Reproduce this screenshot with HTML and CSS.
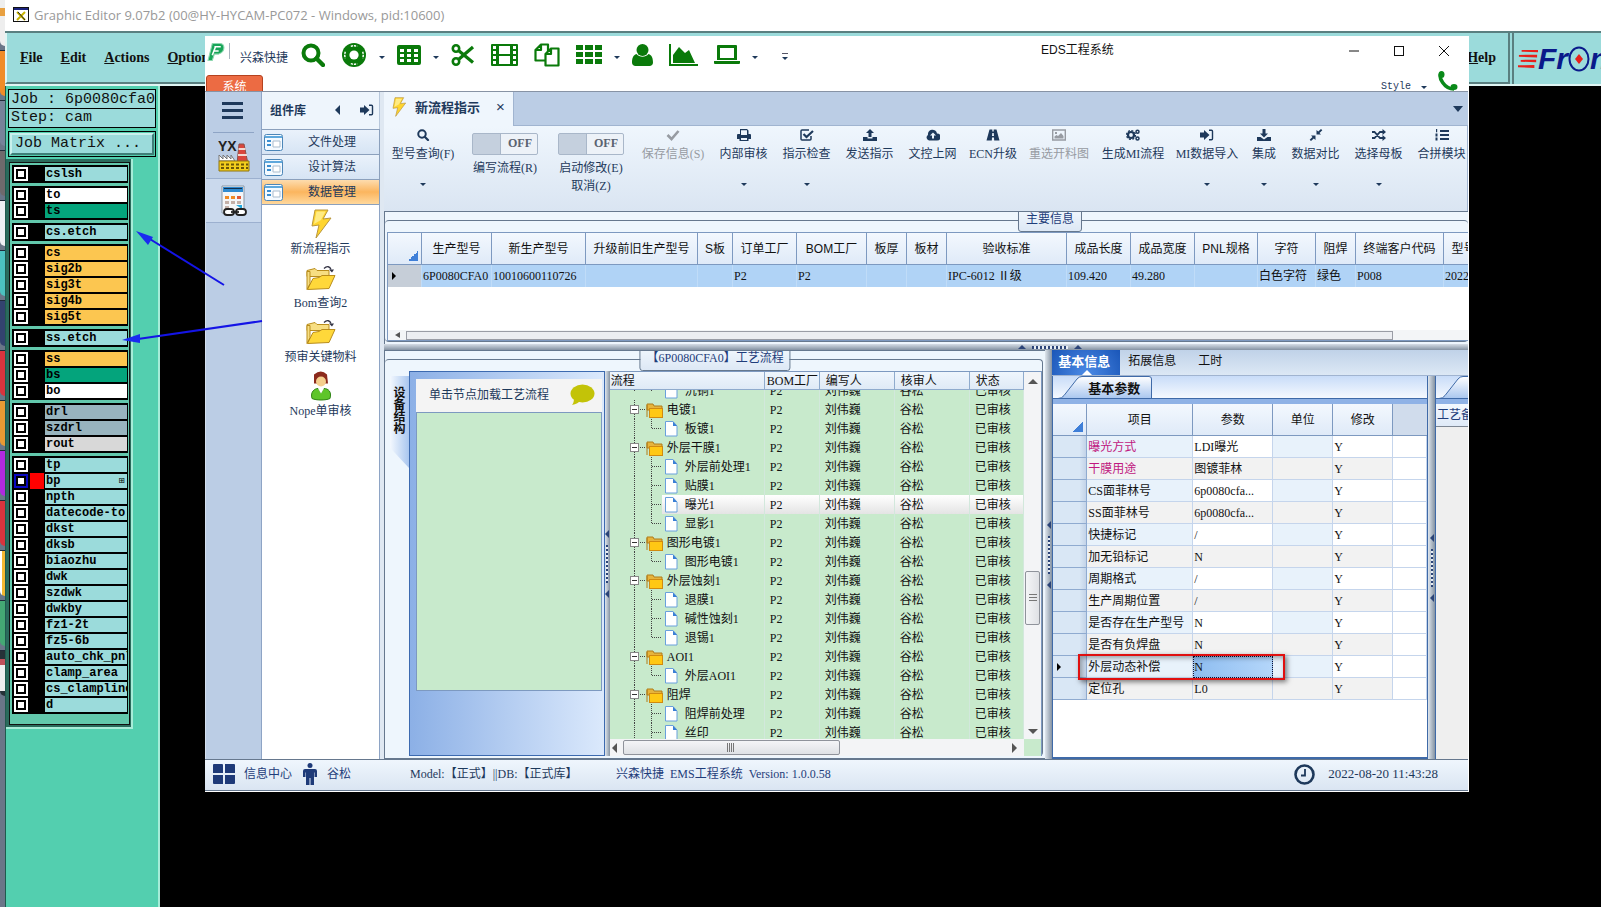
FILE: index.html
```html
<!DOCTYPE html>
<html lang="zh-CN">
<head>
<meta charset="utf-8">
<title>EDS工程系统</title>
<link rel="stylesheet" href="styles.css">
</head>
<body>
<svg class="sprite" aria-hidden="true">
  <symbol id="i-search" viewBox="0 0 24 24"><circle cx="10" cy="10" r="7.5" fill="none" stroke="currentColor" stroke-width="4"/><path d="M15.5 15.5 22 22" stroke="currentColor" stroke-width="4.4" stroke-linecap="round"/></symbol>
  <symbol id="i-ring" viewBox="0 0 26 26"><circle cx="13" cy="13" r="13" fill="currentColor"/><circle cx="13" cy="13" r="5" fill="#fff"/><g fill="none" stroke="#fff" stroke-width="1.6" stroke-dasharray="2.4 1"><path d="M9.500 3.600a10 10 0 0 1 7 0M9.500 22.400a10 10 0 0 0 7 0M3.600 9.500a10 10 0 0 0 0 7M22.400 9.500a10 10 0 0 1 0 7"/></g></symbol>
  <symbol id="i-table" viewBox="0 0 24 20"><path fill-rule="evenodd" fill="currentColor" d="M2 0h20a2 2 0 0 1 2 2v16a2 2 0 0 1-2 2H2a2 2 0 0 1-2-2V2a2 2 0 0 1 2-2zM3 4v3h4V4zm7 0v3h4V4zm7 0v3h4V4zM3 9v3h4V9zm7 0v3h4V9zm7 0v3h4V9zM3 14v3h4v-3zm7 0v3h4v-3zm7 0v3h4v-3z"/></symbol>
  <symbol id="i-cut" viewBox="0 0 24 24"><g fill="none" stroke="currentColor" stroke-width="2.6"><circle cx="5" cy="5.500" r="3.200"/><circle cx="5" cy="18.500" r="3.200"/><path d="M7.500 7.500 22 19.500M7.500 16.500 22 4" stroke-width="3.200"/></g></symbol>
  <symbol id="i-film" viewBox="0 0 27 22"><path fill-rule="evenodd" fill="currentColor" d="M1 0h25a1 1 0 0 1 1 1v20a1 1 0 0 1-1 1H1a1 1 0 0 1-1-1V1a1 1 0 0 1 1-1zM2 2v3h3V2zm0 5v3h3V7zm0 5v3h3v-3zm0 5v3h3v-3zM22 2v3h3V2zm0 5v3h3V7zm0 5v3h3v-3zm0 5v3h3v-3zM8 2v8h11V2zm0 10v8h11v-8z"/></symbol>
  <symbol id="i-copy" viewBox="0 0 26 24"><g fill="#fff" stroke="currentColor" stroke-width="2.200" stroke-linejoin="round"><path d="M7 1.500h7v16H1.500V7zM7 1.500V7H1.500"/><path d="M17 5.500h7.500v17H11.500V11zM17 5.500V11h-5.500"/></g></symbol>
  <symbol id="i-grid" viewBox="0 0 26 20"><path fill="currentColor" d="M0 0h7v5H0zM9 0h8v5H9zM19 0h7v5h-7zM0 7h7v5H0zM9 7h8v5H9zM19 7h7v5h-7zM0 14h7v5H0zM9 14h8v5H9zM19 14h7v5h-7z"/></symbol>
  <symbol id="i-user" viewBox="0 0 21 22"><circle cx="10.500" cy="6" r="6" fill="currentColor"/><path fill="currentColor" d="M4.500 10c3 3.500 9 3.500 12 0 3.500 1 4.500 4.500 4.500 8.500 0 2-1.500 3.500-3.500 3.500h-14C1.500 22 0 20.500 0 18.500 0 14.500 1 11 4.500 10z"/></symbol>
  <symbol id="i-area" viewBox="0 0 29 22"><path fill="currentColor" d="M0 0h2v20h27v2H0zM4 19v-8l6-8 6 6 4-3 6 13z"/></symbol>
  <symbol id="i-laptop" viewBox="0 0 26 20"><path fill-rule="evenodd" fill="currentColor" d="M4 0h18a1 1 0 0 1 1 1v14H3V1a1 1 0 0 1 1-1zm2 3v10h14V3zM0 16h26v2a1 1 0 0 1-1 1H1a1 1 0 0 1-1-1z"/></symbol>
  <symbol id="i-bolt" viewBox="0 0 22 30"><path d="M5 1h13l-5 9 8-1L6 29l3-13-7 1z" fill="#ffd52e" stroke="#b9963c" stroke-width="1"/><path d="M6.500 2.500h9L11 11l-7 4z" fill="#fff3a8" opacity=".7"/></symbol>
  <symbol id="i-form" viewBox="0 0 19 17"><rect x=".5" y=".5" width="18" height="16" rx="2" fill="#f4faff" stroke="#4c86b8"/><path d="M1 2h17v2H1z" fill="#5fa8dc"/><path d="M3 7h4M3 11h4" stroke="#3b8ed0" stroke-width="2"/><path d="M9 7h7v6H9z" fill="#fff" stroke="#a9bccd"/></symbol>
  <symbol id="i-folder-open" viewBox="0 0 30 25"><path d="M1 5l8-2 2 2h12v6H1z" fill="#f7de82" stroke="#b98d1c"/><path d="M1 24V6h3v12z" fill="#f7de82" stroke="#b98d1c"/><path d="M1.500 24 7 13l6-1 3-2h13l-6 13z" fill="#ffd83a" stroke="#b98d1c"/><path d="M18 3c3-3 6-2 7 1" fill="none" stroke="#334" stroke-width="1.300"/><path d="M23 4h5l-2 3z" fill="#334"/></symbol>
  <symbol id="i-folder" viewBox="0 0 17 16"><path d="M1 2h6l1 2h8v4H1z" fill="#e6b43c" stroke="#b07c1a"/><path d="M1 15V3" stroke="#b07c1a"/><rect x="3.500" y="6.500" width="13" height="9" fill="#ffc814" stroke="#d08a10"/></symbol>
  <symbol id="i-file" viewBox="0 0 14 16"><path d="M1.500.5H9L13 5v10H1.500z" fill="#fff" stroke="#69a0dc"/><path d="M9 .5V5h4z" fill="#3a7fd5"/></symbol>
  <symbol id="i-person" viewBox="0 0 22 29"><path d="M4 3q7-6 13 0l1 9H4z" fill="#8c2a1c"/><circle cx="11" cy="10" r="5" fill="#f5cf8e"/><path d="M2 27c-2-7 3-10 6-10l3 4 3-4c4 0 8 3 6 10-4 2-14 2-18 0z" fill="#5ec52a" stroke="#2f8415"/><path d="m8 17 3 5 3-5z" fill="#fff"/></symbol>
  <symbol id="i-check" viewBox="0 0 14 12"><path d="m1.500 6 4 4 7-8" fill="none" stroke="currentColor" stroke-width="2.600"/></symbol>
  <symbol id="i-print" viewBox="0 0 14 12"><path fill="currentColor" fill-rule="evenodd" d="M3 0h7l1.500 1.500V5H13a1 1 0 0 1 1 1v4h-2.500v2h-9v-2H0V6a1 1 0 0 1 1-1h2zm1 1.200V6h6V1.200zM4 9v2h6V9z"/></symbol>
  <symbol id="i-tick" viewBox="0 0 14 12"><path d="M11 7v3a1 1 0 0 1-1 1H2a1 1 0 0 1-1-1V2a1 1 0 0 1 1-1h7" fill="none" stroke="currentColor" stroke-width="1.500"/><path d="m3.500 5 3 3L13 2" fill="none" stroke="currentColor" stroke-width="2.200"/></symbol>
  <symbol id="i-up" viewBox="0 0 14 12"><path fill="currentColor" d="m7 0 4 4H8.500v4h-3V4H3zM0 8h4.500v1.500h5V8H14v4H0z"/></symbol>
  <symbol id="i-down" viewBox="0 0 14 12"><path fill="currentColor" d="m7 8.500-4-4h2.500V0h3v4.500H11zM0 8h3.500L7 10.500 10.500 8H14v4H0z"/></symbol>
  <symbol id="i-cloud" viewBox="0 0 14 12"><path fill="currentColor" fill-rule="evenodd" d="M3 11.500a3 3 0 0 1-1-5.500 4.500 4.500 0 0 1 9-1.500 3.500 3.500 0 0 1 0 7zM7 3.500l-3 3h2v3h2v-3h2z"/></symbol>
  <symbol id="i-road" viewBox="0 0 14 12"><path fill="currentColor" fill-rule="evenodd" d="M3.500.5h2.800v2h1.400v-2h2.800L13.500 11.500H8.200l-.2-3H6l-.2 3H.5zM6.300 4 6 7h2l-.3-3z"/></symbol>
  <symbol id="i-pic" viewBox="0 0 14 12"><path d="M.7 1h12.600v10H.7z" fill="none" stroke="currentColor" stroke-width="1.400"/><path fill="currentColor" d="M2.500 9.500V7.500l2-1.500 1.500 1 3-3 2.500 3v2.500zM3 3h2v2H3z"/></symbol>
  <symbol id="i-gears" viewBox="0 0 14 12"><circle cx="5" cy="6" r="3" fill="none" stroke="currentColor" stroke-width="2.200"/><circle cx="5" cy="6" r="4.500" fill="none" stroke="currentColor" stroke-width="1.200" stroke-dasharray="2 1.500"/><circle cx="11.500" cy="2.800" r="1.500" fill="none" stroke="currentColor" stroke-width="1.500"/><circle cx="11.500" cy="9.500" r="1.500" fill="none" stroke="currentColor" stroke-width="1.500"/></symbol>
  <symbol id="i-enter" viewBox="0 0 14 12"><path fill="currentColor" d="M0 3.500h4V1L9.500 6 4 11V8.500H0z"/><path d="M9 1.200h2.500a1 1 0 0 1 1 1v7.600a1 1 0 0 1-1 1H9" fill="none" stroke="currentColor" stroke-width="1.400"/></symbol>
  <symbol id="i-compress" viewBox="0 0 14 12"><path fill="currentColor" d="M7.500 5.500V1l1.700 1.600L12 0l1.300 1.200-2.800 2.700L12 5.500zM6.500 6.500V11l-1.700-1.600L2 12 .7 10.800l2.800-2.700L2 6.500z"/></symbol>
  <symbol id="i-shuffle" viewBox="0 0 14 12"><path d="M0 3h2.500L8 9h3M0 9h2.500L8 3h3" fill="none" stroke="currentColor" stroke-width="1.800"/><path fill="currentColor" d="m10.500 0 3.500 3-3.500 3zM10.500 6l3.500 3-3.500 3z"/></symbol>
  <symbol id="i-list" viewBox="0 0 14 12"><path fill="currentColor" d="M5 1h9v2H5zM5 5h9v2H5zM5 9h9v2H5zM1 0h1.200v3.300H1zM.5 4.500h2v3h-2zM.5 8.500h2v3h-2z"/></symbol>
</svg>

<div class="desktop">
  <aside class="dock">
    <i class="d1"></i><i class="d2"></i><i class="d3"></i><i class="d4"></i><i class="d5"></i><i class="d6"></i><i class="d7"></i><i class="d8"></i><i class="d9"></i><i class="d10"></i><i class="d11"></i><i class="d12"></i><i class="d13"></i><i class="d14"></i>
  </aside>

  <section class="editor">
    <header class="ed-title">
      <svg width="16" height="15" viewBox="0 0 16 15"><rect x=".5" y=".5" width="15" height="14" fill="#fff" stroke="#111"/><path d="M1 1h14v2H1z" fill="#1a237e"/><path d="m4 5 8 8M12 5l-8 8" stroke="#c8b400" stroke-width="2"/><path d="m5 5 7 8" stroke="#222"/></svg>
      <span>Graphic Editor 9.07b2 (00@HY-HYCAM-PC072 - Windows, pid:10600)</span>
    </header>
    <div class="ed-menu">
      <nav class="menu-panel">
        <button>File</button><button>Edit</button><button>Actions</button><button>Options</button>
        <button class="help">Help</button>
      </nav>
      <div class="brand">
        <svg width="20" height="22" viewBox="0 0 22 22"><path fill="#e8201a" d="M4 1h18v2.500L4 3zM1 6.500l20-.2v3L1 8.500zM3 12l17-.3v3L3 14zM0 18l18-.5v3.300L0 20z"/></svg>
        <span>Fr</span>
        <svg width="22" height="26" viewBox="0 0 22 26"><ellipse cx="11" cy="13" rx="9.500" ry="11.500" fill="none" stroke="#0a1a8a" stroke-width="2"/><path fill="#e8201a" d="m11 8 4 5-4 5-4-5z"/></svg>
        <span>n</span>
      </div>
    </div>
    <div class="ed-body">
      <div class="job">
        <div class="job-info"><div>Job : 6p0080cfa0</div><div>Step: cam</div></div>
        <div class="job-btn"><button>Job Matrix ...</button></div>
        <div class="layers">
          <div class="stack">
            <div class="grp"><label><input type="checkbox"><span>cslsh</span></label></div>
            <div class="grp"><label><input type="checkbox"><span class="w">to</span></label><label><input type="checkbox"><span class="g">ts</span></label></div>
            <div class="grp"><label><input type="checkbox"><span>cs.etch</span></label></div>
            <div class="grp"><label><input type="checkbox"><span class="o">cs</span></label><label><input type="checkbox"><span class="o">sig2b</span></label><label><input type="checkbox"><span class="o">sig3t</span></label><label><input type="checkbox"><span class="o">sig4b</span></label><label><input type="checkbox"><span class="o">sig5t</span></label></div>
            <div class="grp"><label><input type="checkbox"><span>ss.etch</span></label></div>
            <div class="grp"><label><input type="checkbox"><span class="o">ss</span></label><label><input type="checkbox"><span class="g">bs</span></label><label><input type="checkbox"><span class="w">bo</span></label></div>
            <div class="grp"><label><input type="checkbox"><span class="s">drl</span></label><label><input type="checkbox"><span class="s">szdrl</span></label><label><input type="checkbox"><span class="l">rout</span></label></div>
            <div class="grp"><label><input type="checkbox"><span>tp</span></label><label class="cur"><input type="checkbox" checked><span>bp<b>⊞</b></span></label><label><input type="checkbox"><span>npth</span></label><label><input type="checkbox"><span>datecode-to</span></label><label><input type="checkbox"><span>dkst</span></label><label><input type="checkbox"><span>dksb</span></label><label><input type="checkbox"><span>biaozhu</span></label><label><input type="checkbox"><span>dwk</span></label><label><input type="checkbox"><span>szdwk</span></label><label><input type="checkbox"><span>dwkby</span></label><label><input type="checkbox"><span>fz1-2t</span></label><label><input type="checkbox"><span>fz5-6b</span></label><label><input type="checkbox"><span>auto_chk_pnl</span></label><label><input type="checkbox"><span>clamp_area</span></label><label><input type="checkbox"><span>cs_clampline</span></label><label><input type="checkbox"><span>d</span></label></div>
          </div>
        </div>
      </div>
    </div>
  </section>

  <main class="eds">
    <header class="top">
      <div class="quick">
        <svg class="logo" width="18" height="20" viewBox="0 0 17 18"><path d="M5 1h7q4 0 4 4t-5 6H7l-2 6H1z" fill="#18a558" stroke="#8fd8b0"/><path d="M7 4h6M6 8h5M5 12l3-8" stroke="#fff" stroke-width="1.500" fill="none"/></svg>
        <i class="bar"></i><span class="company">兴森快捷</span>
        <div class="icons">
          <button aria-label="搜索"><svg width="24" height="24"><use href="#i-search"/></svg></button>
          <button aria-label="帮助"><svg width="26" height="24"><use href="#i-ring"/></svg></button><i class="caret"></i>
          <button aria-label="表格"><svg width="24" height="20"><use href="#i-table"/></svg></button><i class="caret"></i>
          <button aria-label="剪切"><svg width="24" height="24"><use href="#i-cut"/></svg></button>
          <button aria-label="胶片"><svg width="27" height="22"><use href="#i-film"/></svg></button>
          <button aria-label="复制"><svg width="26" height="24"><use href="#i-copy"/></svg></button>
          <button aria-label="列表"><svg width="26" height="20"><use href="#i-grid"/></svg></button><i class="caret"></i>
          <button aria-label="用户"><svg width="21" height="22"><use href="#i-user"/></svg></button>
          <button aria-label="图表"><svg width="29" height="22"><use href="#i-area"/></svg></button>
          <button aria-label="终端"><svg width="26" height="20"><use href="#i-laptop"/></svg></button><i class="caret"></i>
          <button class="over" aria-label="更多"><i class="caret"></i></button>
        </div>
      </div>
      <a class="sys" href="#">系统</a>
      <h1>EDS工程系统</h1>
      <div class="win">
        <button aria-label="最小化"><svg width="12" height="12"><path d="M1 6h10" stroke="#111"/></svg></button>
        <button aria-label="最大化"><svg width="12" height="12"><rect x="1.500" y="1.500" width="9" height="9" fill="none" stroke="#111"/></svg></button>
        <button aria-label="关闭"><svg width="12" height="12"><path d="m1 1 10 10M11 1 1 11" stroke="#111"/></svg></button>
      </div>
      <div class="style"><span>Style</span><i class="caret"></i>
        <svg width="21" height="20" viewBox="0 0 21 20"><path d="M4 2C1 6 7 18 17 18" fill="none" stroke="#0a8a1a" stroke-width="3.500"/><ellipse cx="4.500" cy="3.500" rx="3" ry="3.500" fill="#0a8a1a"/><ellipse cx="17" cy="16" rx="3.500" ry="3" fill="#0a8a1a"/></svg>
      </div>
    </header>

    <div class="body">
      <nav class="rail">
        <button class="burger" aria-label="菜单"><i></i><i></i><i></i></button>
        <button class="r1" aria-label="YX"><svg width="32" height="32" viewBox="0 0 32 32"><path d="M21 4h5l4 20H19z" fill="#d9463c" stroke="#8d5048"/><path d="M20.500 9h7M20 15h9" stroke="#f3d8d0" stroke-width="2"/><path d="M1 21v-6l4 4v-4l4 4v-4l4 4v-4l4 6z" fill="#fff" stroke="#777"/><path d="M1 21h30v10H1z" fill="#f2cd1c" stroke="#8f7410"/><path d="M3 24.500h27M3 28h27" stroke="#6b5608" stroke-width="2" stroke-dasharray="3 2"/><text x="0" y="11" class="yx">YX</text></svg></button>
        <button class="r2" aria-label="报表"><svg width="30" height="32" viewBox="0 0 30 32"><path d="M3 1h22v27H3z" fill="#f4f6f8" stroke="#8896a5"/><path d="M4 2h20v5H4z" fill="#2f8ad0"/><path d="M5 3h18v1H5z" fill="#12314f"/><path d="M6 11h4v3H6zM12 11h4v3h-4z" fill="#f08a24"/><path d="M18 11h4v3h-4z" fill="#e05a3a"/><path d="M6 16h4v3H6zM12 16h4v3h-4zM6 21h4v3H6zM18 16h4v3h-4z" fill="#c3b0a8"/><path d="M17 20h6v4z" fill="#22a8dc"/><g fill="#fff" stroke="#222" stroke-width="1.800"><rect x="5" y="24" width="10" height="6" rx="3"/><rect x="17" y="24" width="10" height="6" rx="3"/><path d="M12 27h8"/></g></svg></button>
      </nav>

      <aside class="lib">
        <header><b>组件库</b><i class="left"></i><svg width="14" height="12"><use href="#i-enter"/></svg></header>
        <button class="cat"><svg width="19" height="17"><use href="#i-form"/></svg><span>文件处理</span></button>
        <button class="cat"><svg width="19" height="17"><use href="#i-form"/></svg><span>设计算法</span></button>
        <button class="cat on"><svg width="19" height="17"><use href="#i-form"/></svg><span>数据管理</span></button>
        <div class="tools">
          <button><svg width="24" height="30"><use href="#i-bolt"/></svg><span>新流程指示</span></button>
          <button><svg width="30" height="30"><use href="#i-folder-open"/></svg><span>Bom查询2</span></button>
          <button><svg width="30" height="30"><use href="#i-folder-open"/></svg><span>预审关键物料</span></button>
          <button><svg width="22" height="30"><use href="#i-person"/></svg><span>Nope单审核</span></button>
        </div>
      </aside>

      <div class="work">
        <div class="tabs"><button class="tab"><svg width="16" height="20"><use href="#i-bolt"/></svg><b>新流程指示</b><span>×</span></button><i class="caret big"></i></div>
        <div class="ribbon">
          <button class="c-key"><svg width="14" height="12"><use href="#i-search"/></svg><span>型号查询(F)</span><i class="caret"></i></button>
          <label class="c-sw"><input type="checkbox" role="switch"><em>OFF</em><span>编写流程(R)</span></label>
          <label class="c-sw"><input type="checkbox" role="switch"><em>OFF</em><span>启动修改(E)</span><span>取消(Z)</span></label>
          <button class="c-key" disabled><svg width="14" height="12"><use href="#i-check"/></svg><span>保存信息(S)</span></button>
          <button class="c4"><svg width="14" height="12"><use href="#i-print"/></svg><span>内部审核</span><i class="caret"></i></button>
          <button class="c4"><svg width="14" height="12"><use href="#i-tick"/></svg><span>指示检查</span><i class="caret"></i></button>
          <button class="c4"><svg width="14" height="12"><use href="#i-up"/></svg><span>发送指示</span></button>
          <button class="c4"><svg width="14" height="12"><use href="#i-cloud"/></svg><span>文控上网</span></button>
          <button class="c3"><svg width="14" height="12"><use href="#i-road"/></svg><span>ECN升级</span></button>
          <button class="c5" disabled><svg width="14" height="12"><use href="#i-pic"/></svg><span>重选开料图</span></button>
          <button class="c5"><svg width="14" height="12"><use href="#i-gears"/></svg><span>生成MI流程</span></button>
          <button class="c5"><svg width="14" height="12"><use href="#i-enter"/></svg><span>MI数据导入</span><i class="caret"></i></button>
          <button class="c2"><svg width="14" height="12"><use href="#i-down"/></svg><span>集成</span><i class="caret"></i></button>
          <button class="c4"><svg width="14" height="12"><use href="#i-compress"/></svg><span>数据对比</span><i class="caret"></i></button>
          <button class="c4"><svg width="14" height="12"><use href="#i-shuffle"/></svg><span>选择母板</span><i class="caret"></i></button>
          <button class="c4"><svg width="14" height="12"><use href="#i-list"/></svg><span>合拼模块</span></button>
        </div>

        <section class="box info">
          <h2 class="tag">主要信息</h2>
          <div class="frame">
            <div class="grid-wrap">
              <table class="main-grid">
                <colgroup><col class="k34"><col class="k70"><col class="k94"><col class="k112"><col class="k35"><col class="k64"><col class="k70"><col class="k40"><col class="k40"><col class="k120"><col class="k64"><col class="k64"><col class="k63"><col class="k58"><col class="k40"><col class="k88"><col class="k64"></colgroup>
                <thead><tr><th class="corner"></th><th>生产型号</th><th>新生产型号</th><th>升级前旧生产型号</th><th>S板</th><th>订单工厂</th><th>BOM工厂</th><th>板厚</th><th>板材</th><th>验收标准</th><th>成品长度</th><th>成品宽度</th><th>PNL规格</th><th>字符</th><th>阻焊</th><th>终端客户代码</th><th>型号日期</th></tr></thead>
                <tbody><tr><td class="ptr"><i></i></td><td>6P0080CFA0</td><td>10010600110726</td><td></td><td></td><td>P2</td><td>P2</td><td></td><td></td><td>IPC-6012 Ⅱ级</td><td>109.420</td><td>49.280</td><td></td><td>白色字符</td><td>绿色</td><td>P008</td><td>2022-08</td></tr></tbody>
              </table>
            </div>
            <div class="hbar"><i class="la"></i><i class="thumb"></i></div>
          </div>
        </section>

        <div class="split-h"><i class="ua"></i><i class="dots"></i><i class="ua"></i></div>

        <div class="lower">
          <section class="box flow">
            <h2 class="tag">【6P0080CFA0】工艺流程</h2>
            <div class="frame">
              <div class="dev">
                <button class="vtab">设备结构</button>
                <div class="pane">
                  <div class="note"><span>单击节点加载工艺流程</span><svg width="25" height="22" viewBox="0 0 25 22"><ellipse cx="12.500" cy="9.500" rx="12" ry="9" fill="#c3c308"/><path d="M4 14q0 5-2 7 6-1 9-5z" fill="#c3c308"/></svg></div>
                  <div class="canvas"></div>
                </div>
              </div>
              <div class="split-v"><i class="sa"></i><i class="vdots"></i><i class="sa"></i></div>
              <div class="tree">
                <div class="rows">
                  <table>
                    <colgroup><col class="t1"><col class="t2"><col class="t3"><col class="t3"><col class="t4"></colgroup>
                    <thead><tr><th>流程</th><th>BOM工厂</th><th>编写人</th><th>核审人</th><th>状态</th></tr></thead>
                    <tbody>
                      <tr class="cut"><td><div class="leaf last"><svg width="14" height="16"><use href="#i-file"/></svg>沉铜1</div></td><td>P2</td><td>刘伟巍</td><td>谷松</td><td>已审核</td></tr>
                      <tr><td><div class="dir"><i></i><svg width="17" height="16"><use href="#i-folder"/></svg>电镀1</div></td><td>P2</td><td>刘伟巍</td><td>谷松</td><td>已审核</td></tr>
                      <tr><td><div class="leaf last"><svg width="14" height="16"><use href="#i-file"/></svg>板镀1</div></td><td>P2</td><td>刘伟巍</td><td>谷松</td><td>已审核</td></tr>
                      <tr><td><div class="dir"><i></i><svg width="17" height="16"><use href="#i-folder"/></svg>外层干膜1</div></td><td>P2</td><td>刘伟巍</td><td>谷松</td><td>已审核</td></tr>
                      <tr><td><div class="leaf"><svg width="14" height="16"><use href="#i-file"/></svg>外层前处理1</div></td><td>P2</td><td>刘伟巍</td><td>谷松</td><td>已审核</td></tr>
                      <tr><td><div class="leaf"><svg width="14" height="16"><use href="#i-file"/></svg>贴膜1</div></td><td>P2</td><td>刘伟巍</td><td>谷松</td><td>已审核</td></tr>
                      <tr class="sel"><td><div class="leaf"><svg width="14" height="16"><use href="#i-file"/></svg>曝光1</div></td><td>P2</td><td>刘伟巍</td><td>谷松</td><td>已审核</td></tr>
                      <tr><td><div class="leaf last"><svg width="14" height="16"><use href="#i-file"/></svg>显影1</div></td><td>P2</td><td>刘伟巍</td><td>谷松</td><td>已审核</td></tr>
                      <tr><td><div class="dir"><i></i><svg width="17" height="16"><use href="#i-folder"/></svg>图形电镀1</div></td><td>P2</td><td>刘伟巍</td><td>谷松</td><td>已审核</td></tr>
                      <tr><td><div class="leaf last"><svg width="14" height="16"><use href="#i-file"/></svg>图形电镀1</div></td><td>P2</td><td>刘伟巍</td><td>谷松</td><td>已审核</td></tr>
                      <tr><td><div class="dir"><i></i><svg width="17" height="16"><use href="#i-folder"/></svg>外层蚀刻1</div></td><td>P2</td><td>刘伟巍</td><td>谷松</td><td>已审核</td></tr>
                      <tr><td><div class="leaf"><svg width="14" height="16"><use href="#i-file"/></svg>退膜1</div></td><td>P2</td><td>刘伟巍</td><td>谷松</td><td>已审核</td></tr>
                      <tr><td><div class="leaf"><svg width="14" height="16"><use href="#i-file"/></svg>碱性蚀刻1</div></td><td>P2</td><td>刘伟巍</td><td>谷松</td><td>已审核</td></tr>
                      <tr><td><div class="leaf last"><svg width="14" height="16"><use href="#i-file"/></svg>退锡1</div></td><td>P2</td><td>刘伟巍</td><td>谷松</td><td>已审核</td></tr>
                      <tr><td><div class="dir"><i></i><svg width="17" height="16"><use href="#i-folder"/></svg>AOI1</div></td><td>P2</td><td>刘伟巍</td><td>谷松</td><td>已审核</td></tr>
                      <tr><td><div class="leaf last"><svg width="14" height="16"><use href="#i-file"/></svg>外层AOI1</div></td><td>P2</td><td>刘伟巍</td><td>谷松</td><td>已审核</td></tr>
                      <tr><td><div class="dir"><i></i><svg width="17" height="16"><use href="#i-folder"/></svg>阻焊</div></td><td>P2</td><td>刘伟巍</td><td>谷松</td><td>已审核</td></tr>
                      <tr><td><div class="leaf"><svg width="14" height="16"><use href="#i-file"/></svg>阻焊前处理</div></td><td>P2</td><td>刘伟巍</td><td>谷松</td><td>已审核</td></tr>
                      <tr><td><div class="leaf"><svg width="14" height="16"><use href="#i-file"/></svg>丝印</div></td><td>P2</td><td>刘伟巍</td><td>谷松</td><td>已审核</td></tr>
                    </tbody>
                  </table>
                </div>
                <div class="vscroll"><i class="ua"></i><i class="vthumb"></i><i class="da"></i></div>
                <div class="hscroll"><i class="sa"></i><i class="hthumb"></i><i class="ra"></i></div>
              </div>
            </div>
          </section>

          <div class="split-v main"><i class="sa"></i><i class="vdots"></i><i class="sa"></i></div>

          <section class="detail">
            <nav class="dtabs"><button class="on">基本信息</button><button>拓展信息</button><button>工时</button></nav>
            <div class="dbody">
              <div class="params">
                <div class="subtabs"><svg width="94" height="23" viewBox="0 0 94 23" aria-hidden="true"><defs><linearGradient id="tg" x2="0" y2="1"><stop offset="0" stop-color="#fff"/><stop offset="1" stop-color="#a9c6ef"/></linearGradient></defs><path d="M0 22.500q4 0 6-3L19 3q2-2.500 5-2.500h67q2.500 0 2.500 2.500v19.500" fill="url(#tg)" stroke="#3f6aa8"/></svg><button>基本参数</button></div>
                <div class="ptable">
                  <table>
                    <colgroup><col class="p0"><col class="p1"><col class="p2"><col class="p3"><col class="p3"><col></colgroup>
                    <thead><tr><th class="corner"></th><th>项目</th><th>参数</th><th>单位</th><th>修改</th><th class="rest"></th></tr></thead>
                    <tbody>
                      <tr><th></th><td class="pk">曝光方式</td><td>LDI曝光</td><td></td><td>Y</td><td></td></tr>
                      <tr><th></th><td class="pk">干膜用途</td><td>图镀菲林</td><td></td><td>Y</td><td></td></tr>
                      <tr><th></th><td>CS面菲林号</td><td>6p0080cfa...</td><td></td><td>Y</td><td></td></tr>
                      <tr><th></th><td>SS面菲林号</td><td>6p0080cfa...</td><td></td><td>Y</td><td></td></tr>
                      <tr><th></th><td>快捷标记</td><td>/</td><td></td><td>Y</td><td></td></tr>
                      <tr><th></th><td>加无铅标记</td><td>N</td><td></td><td>Y</td><td></td></tr>
                      <tr><th></th><td>周期格式</td><td>/</td><td></td><td>Y</td><td></td></tr>
                      <tr><th></th><td>生产周期位置</td><td>/</td><td></td><td>Y</td><td></td></tr>
                      <tr><th></th><td>是否存在生产型号</td><td>N</td><td></td><td>Y</td><td></td></tr>
                      <tr><th></th><td>是否有负焊盘</td><td>N</td><td></td><td>Y</td><td></td></tr>
                      <tr class="act"><th><i></i><div class="mark"></div></th><td>外层动态补偿</td><td class="edit">N</td><td></td><td>Y</td><td></td></tr>
                      <tr><th></th><td>定位孔</td><td>L0</td><td></td><td>Y</td><td></td></tr>
                    </tbody>
                  </table>
                </div>
              </div>
              <div class="split-v"><i class="sa"></i><i class="vdots"></i><i class="sa"></i></div>
              <div class="remark">
                <div class="subtabs"><svg width="94" height="23" viewBox="0 0 94 23" aria-hidden="true"><path d="M0 22.500q4 0 6-3L19 3q2-2.500 5-2.500h67q2.500 0 2.500 2.500v19.500" fill="url(#tg)" stroke="#3f6aa8"/></svg></div>
                <div class="rhead">工艺备</div>
                <div class="rbody"></div>
              </div>
            </div>
          </section>
        </div>
      </div>
    </div>

    <footer class="status">
      <svg width="22" height="20" viewBox="0 0 22 20"><path fill="#1e3a78" d="M0 1q0-1 1-1h8q1 0 1 1v8H0zM12 0h9q1 0 1 1v8H12zM0 11h10v9H1q-1 0-1-1zM12 11h10v8q0 1-1 1h-9z"/></svg>
      <span class="s1">信息中心</span>
      <svg width="14" height="22" viewBox="0 0 14 22"><circle cx="7" cy="2.500" r="2.500" fill="#1e3a78"/><path fill="#1e3a78" d="M2 6h10q2 0 2 2v6h-2.500V9.500h-.5V22H7.500v-7h-1v7H3V9.500h-.5V14H0V8q0-2 2-2z"/></svg>
      <span class="s2">谷松</span>
      <span class="s3">Model:【正式】||DB:【正式库】</span>
      <span class="s4">兴森快捷&nbsp; EMS工程系统&nbsp; Version: 1.0.0.58</span>
      <svg class="clock" width="21" height="21" viewBox="0 0 21 21"><circle cx="10.500" cy="10.500" r="9" fill="none" stroke="#1e395b" stroke-width="2.600"/><path d="M11 5v6.500H7" fill="none" stroke="#1e395b" stroke-width="1.800"/></svg>
      <time>2022-08-20 11:43:28</time>
    </footer>
  </main>

  <svg class="arrows" width="270" height="120" viewBox="0 0 270 120" aria-hidden="true">
    <g stroke="#1414e6" stroke-width="2" fill="#1a2af0"><path d="M224 60 145 11"/><path d="M262 96 138 114"/><path d="m136 6 17 6-5 8z" stroke="none"/><path d="m122 115 18-6v9z" stroke="none"/></g>
  </svg>
</div>
</body>
</html>
```
FILE: styles.css
```css
* { box-sizing: border-box; }
html, body { height: 100%; margin: 0; }
body { font: 12px/16px "Liberation Serif", "Noto Sans CJK SC", serif; color: #1e395b; overflow: hidden; }
button { border: 0; padding: 0; margin: 0; background: none; font: inherit; color: inherit; white-space: nowrap; }
i, em { font-style: normal; }
svg { display: block; flex: none; }
table { border-collapse: separate; border-spacing: 0; table-layout: fixed; }
.sprite { position: absolute; width: 0; height: 0; }
.desktop { position: relative; height: 100vh; display: flex; background: #000; overflow: hidden; }

/* application dock at the far left */
.dock { width: 5px; flex: none; display: flex; flex-direction: column; gap: 4px; background: #6a7688; }
.dock i { height: 46px; flex: none; border-radius: 0 0 0 6px; border-top: 1px solid #222b3a; background: #76839a; }
.dock .d1 { background: linear-gradient(#eee 8px, #e8a040 8px 16px, #eee 16px); border: 0; }
.dock .d2 { background: #f08c28; }
.dock .d4 { background: #6f6a6c; }
.dock .d5 { background: #eef0f4; }
.dock .d6 { background: #4cc2c0; }
.dock .d7 { background: #33436f; }
.dock .d8, .dock .d11 { background: #d8343e; }
.dock .d9 { background: #e89a34; }
.dock .d10 { background: #b02ae0; }
.dock .d12 { background: linear-gradient(90deg, #fff 2px, #f4b832 2px); }
.dock .d13 { background: #44a874; }
.dock .d14 { background: linear-gradient(#263238 8px, #c0505a 8px 14px, #eee 14px 40px, #263238 40px); }

/* background editor */
.editor { flex: 1; min-width: 0; display: flex; flex-direction: column; }
.ed-title { height: 31px; flex: none; display: flex; align-items: center; gap: 5px; padding: 0 0 2px 8px; background: #fff; color: #999; font: 13px/20px "Open Sans", "Noto Sans", sans-serif; white-space: nowrap; }
.ed-menu { height: 55px; flex: none; display: flex; background: #9bdbdb; border-top: 2px solid #5a7f80; border-bottom: 2px solid #dff5f3; }
.menu-panel { flex: 1; display: flex; align-items: center; gap: 18px; padding-left: 13px; border: solid #5a7f80; border-width: 0 2px 2px 0; border-left: 2px solid #dff5f3; margin-right: 2px; color: #111; font: bold 14px/18px "Liberation Serif", serif; }
.menu-panel button::first-letter { text-decoration: underline; }
.menu-panel .help { margin: 0 12px 0 auto; }
.brand { width: 89px; flex: none; border-left: 2px solid #5a7f80; display: flex; align-items: center; padding-left: 4px; overflow: hidden; color: #0a1a8a; font: italic bold 30px/34px "Liberation Sans", sans-serif; }
.ed-body { flex: 1; display: flex; }
.job { width: 155px; background: #53cfaf; border-left: 1px solid #1f5a4e; border-right: 2px solid #a6ecd8; padding-top: 3px; }
.job-info { margin: 0 2px 3px; border: 1px solid #000; background: #9bdbdb; color: #111; font: 15px/19px "Liberation Mono", monospace; white-space: nowrap; }
.job-info div { padding-left: 2px; height: 18px; }
.job-info div + div { border-top: 1px solid #000; height: 19px; line-height: 17px; }
.job-btn { margin: 0 2px; padding: 1px; border: 1px solid #000; }
.job-btn button { display: block; width: 100%; height: 22px; text-align: left; padding-left: 3px; background: #9bdbdb; border: 2px solid; border-color: #c9f0ec #3f7f78 #3f7f78 #c9f0ec; color: #111; font: 15px/18px "Liberation Mono", monospace; }
.layers { width: 127px; margin-top: 2px; padding: 3px 1px 2px 3px; background: #2a6b5c; border-right: 2px solid #a6ecd8; border-bottom: 2px solid #a6ecd8; }
.stack { display: flex; flex-direction: column; gap: 3px; padding: 2px 1px 10px 2px; background: #62c8ac; border: 1px solid #111; }
.grp { background: #000; padding: 1px; }
.grp label { display: flex; height: 16px; align-items: center; overflow: hidden; }
.grp input { appearance: none; width: 14px; height: 14px; margin: 0 17px 0 1px; flex: none; border: 2px solid #fff; background: #fff; box-shadow: inset 0 0 0 2px #000; }
.grp span { flex: 1; min-width: 0; height: 14px; padding-left: 1px; display: flex; justify-content: space-between; overflow: hidden; background: #9bdbdb; color: #000; font: bold 12px/14px "Liberation Mono", monospace; white-space: nowrap; }
.grp b { padding-right: 2px; font: 8px/14px "DejaVu Sans", sans-serif; }
.grp .w { background: #fff; }
.grp .g { background: #04a47c; }
.grp .o { background: #fcc650; }
.grp .s { background: #98b4be; }
.grp .l { background: #d8d8d8; }
.grp .cur { background: linear-gradient(90deg, #000 17px, #f00 17px 31px, #000 31px); }
.grp .cur input { border-color: #0a0ac0; }

/* EDS window */
.eds { position: absolute; left: 205px; right: 132px; top: 36px; bottom: 115px; display: flex; flex-direction: column; background: #fff; border-right: 1px solid #fff; border-bottom: 1px solid #fff; }
.caret { display: block; border: solid transparent; border-width: 3px 3px 0; border-top-color: #1e395b; width: 0; height: 0; flex: none; }
.caret.big { border-width: 6px 5px 0; }
.top { height: 56px; flex: none; position: relative; display: grid; grid-template-columns: 1fr auto; align-items: start; border-bottom: 1px solid #8793a5; overflow: hidden; }
.quick { display: flex; align-items: center; height: 38px; }
.logo { margin: 0 0 6px 2px; }
.bar { width: 1px; height: 16px; margin: 0 10px 8px 4px; background: #aab4c0; }
.company { margin-right: 13px; padding-top: 5px; }
.icons { display: flex; align-items: center; gap: 16px; color: #0a7a0a; }
.icons > .caret { margin: 4px -4px 0 -4px; }
.over { margin: 2px 0 0 12px; padding-top: 3px; border-top: 1px solid #556; }
.sys { position: absolute; left: 1px; top: 39px; width: 57px; height: 18px; border: 1px solid #b5421f; border-radius: 3px 3px 0 0; background: #ec6b43; color: #fff; text-align: center; text-decoration: none; line-height: 22px; }
.top h1 { position: absolute; left: 66.200%; top: 6px; margin: 0; color: #111; font: 12px/16px "Liberation Sans", "Noto Sans CJK SC", sans-serif; }
.win { display: flex; gap: 33px; padding: 9px 18px 0 0; }
.style { position: absolute; right: 10px; top: 34px; display: flex; align-items: center; gap: 10px; height: 22px; }
.style span { padding-top: 12px; font: 10px/12px "Liberation Mono", monospace; }
.style .caret { margin-top: 12px; }
.body { flex: 1; min-height: 0; display: flex; background: #bbcde5; }

.rail { width: 57px; flex: none; display: flex; flex-direction: column; border-right: 1px solid #8ea4c5; border-left: 1px solid #d5e0ef; }
.burger { height: 41px; margin: 0 7px; padding: 0 8px 4px 6px; border-bottom: 1px solid #8ea4c5; display: flex; flex-direction: column; justify-content: center; gap: 4px; }
.burger i { height: 3px; width: 21px; background: #1e395b; margin: 0 auto; }
.r1 { height: 46px; display: grid; place-items: center; border-bottom: 1px solid #9cb0cf; }
.r2 { height: 44px; display: grid; place-items: center; background: #cad9ed; border-bottom: 1px solid #9cb0cf; }
.yx { font: bold 14px "Liberation Sans", sans-serif; fill: #222; }

.lib { width: 122px; flex: none; padding-bottom: 2px; display: flex; flex-direction: column; background: #fff; border-right: 4px solid #dfe8f2; box-shadow: inset -1px 0 #8ea4c5; }
.lib header { height: 37px; flex: none; display: flex; align-items: center; padding: 0 5px 2px 8px; background: #eef5fc; border-right: 1px solid #b7c7db; font: 12px/16px "Noto Sans CJK SC", sans-serif; }
.lib header .left { margin: 0 20px 0 auto; }
.left, .sa { width: 0; height: 0; border: solid transparent; border-width: 5px 5px 5px 0; border-right-color: #1e395b; }
.cat { height: 25px; flex: none; display: flex; align-items: center; padding-left: 2px; border: 1px solid #8ba0bc; border-bottom: 0; border-left: 0; background: linear-gradient(#eaf2fb, #d6e4f4); }
.cat span { flex: 1; padding-right: 2px; padding-left: 4px; text-align: center; }
.cat.on { background: linear-gradient(#fddcae, #fbb55e 50%, #ffd89c); }
.tools { flex: 1; display: flex; flex-direction: column; padding-top: 4px; margin-right: 1px; border-top: 1px solid #8ba0bc; }
.tools button { height: 54px; display: flex; flex-direction: column; align-items: center; gap: 2px; }

.work { flex: 1; min-width: 0; display: flex; flex-direction: column; background: #dae5f2; overflow: hidden; }
.tabs { height: 34px; flex: none; display: flex; align-items: center; justify-content: space-between; padding-right: 5px; background: #bbcde5; border-bottom: 1px solid #a0b4d0; }
.tab { height: 34px; width: 130px; display: flex; align-items: center; padding: 0 0 4px 7px; gap: 8px; background: #eff6fd; border-right: 1px solid #a0b4d0; }
.tab b, .dtabs .on { font: bold 13px/16px "Noto Sans CJK SC", sans-serif; }
.tab span { margin-left: 8px; font: 15px/16px "Liberation Sans", sans-serif; }
.ribbon { height: 85px; flex: none; display: flex; background: linear-gradient(#eff6fd, #dae5f2); border-right: 1px solid #a0b4d0; padding-top: 3px; overflow: hidden; }
.ribbon > * { flex: none; display: flex; flex-direction: column; align-items: center; }
.ribbon svg { margin-bottom: 4px; }
.ribbon button .caret { margin-top: 20px; }
.ribbon button:disabled { color: #979ba2; }
.ribbon span { line-height: 18px; }
.c-key { width: 78px; } .c-sw { width: 86px; position: relative; } .c2 { width: 40px; } .c3 { width: 58px; } .c4 { width: 63px; } .c5 { width: 74px; }
.c-sw input { appearance: none; width: 66px; height: 22px; margin: 4px 0 4px; border: 1px solid #a9b7c9; border-radius: 2px; background: linear-gradient(90deg, #c5d0de 27px, #a9b7c9 27px 28px, #edf2f8 28px); }
.c-sw em { position: absolute; left: 46px; top: 6px; color: #5a6370; font: bold 12px/16px "Liberation Serif", serif; }

.box { position: relative; padding: 8px 0 0 3px; background: #eef6fd; border: solid #66788e; border-width: 1px 0 0 1px; }
.tag { position: absolute; top: -1px; margin: 0; height: 21px; padding: 0 6px; background: linear-gradient(#eef5fc, #dde8f5); border: 1px solid #66788e; border-radius: 0 0 3px 3px; color: #1f3d7a; font: 12px/15px "Liberation Serif", "Noto Sans CJK SC", serif; white-space: nowrap; transform: translateX(-50%); }
.frame { border-top: 1px solid #66788e; border-radius: 4px; padding-top: 11px; margin-left: -3px; padding-left: 2px; }
.info { height: 133px; flex: none; }
.info .tag { left: 61.400%; height: 21px; padding: 0 7px; }
.info .frame { height: 122px; display: flex; flex-direction: column; border-bottom: 1px solid #66788e; }
.grid-wrap { flex: 1; overflow: hidden; background: #fff; border: solid #7d99c0; border-width: 1px 0 0 1px; }
.main-grid { width: 1120px; color: #111; }
.main-grid th, .ptable thead th { height: 32px; padding: 0; border-right: 1px solid #7d99c0; border-bottom: 1px solid #7d99c0; background: linear-gradient(#f3f8fe, #dfeaf8); font: 12px/16px "Liberation Sans", "Noto Sans CJK SC", sans-serif; color: #111; white-space: nowrap; }
.main-grid .corner, .ptable thead .corner { background: linear-gradient(135deg, transparent 50%, #3f7fd8 50%) right 3px bottom 3px / 10px 10px no-repeat, linear-gradient(#f3f8fe, #dfeaf8); }
.main-grid td { height: 22px; padding: 0 0 0 1px; background: #b0d3f6; border-right: 1px solid #c0dcf8; white-space: nowrap; overflow: hidden; line-height: 16px; }
.main-grid .ptr { background: #c6ced8; padding-left: 4px; }
.ptr i, .act i { display: block; width: 0; height: 0; border: solid transparent; border-width: 4px 0 4px 4px; border-left-color: #000; }
.k34 { width: 34px; } .k35 { width: 35px; } .k40 { width: 40px; } .k58 { width: 58px; } .k63 { width: 63px; } .k64 { width: 64px; } .k70 { width: 70px; } .k88 { width: 88px; } .k94 { width: 94px; } .k112 { width: 112px; } .k120 { width: 120px; }
.hbar { height: 11px; flex: none; display: flex; align-items: center; background: #f3f5f7; border: solid #7d99c0; border-width: 0 0 1px 1px; padding-left: 7px; }
.la { width: 0; height: 0; border: solid transparent; border-width: 3px 5px 3px 0; border-right-color: #555; }
.thumb { width: 92%; height: 9px; margin-left: 6px; border: 1px solid #9a9da6; background: #eceef2; }
.split-h { height: 6px; flex: none; display: flex; justify-content: center; align-items: center; gap: 6px; padding-left: 247px; background: linear-gradient(#d5dde6, #8593a3); }
.ua { width: 0; height: 0; border: solid transparent; border-width: 0 4px 4px; border-bottom-color: #2b4478; }
.dots { width: 36px; height: 3px; background: repeating-linear-gradient(90deg, #2b4478 0 2px, #e8eef5 2px 4px); }

.lower { flex: 1; min-height: 0; display: flex; }
.flow { flex: 661 1 0; min-width: 0; display: flex; flex-direction: column; border-bottom: 1px solid #66788e; padding-bottom: 2px; }
.flow .tag { left: 50%; }
.flow .frame { flex: 1; min-height: 0; display: flex; margin-right: 2px; padding-top: 11px; border-right: 1px solid #66788e; }
.dev { flex: 215 1 0; display: flex; min-width: 0; padding-left: 3px; }
.vtab { width: 19px; height: 92px; margin-top: 5px; flex: none; writing-mode: vertical-rl; text-orientation: upright; text-align: left; padding: 10px 2px 0; color: #111; font: bold 12px/15px "Noto Sans CJK SC", sans-serif; background: linear-gradient(90deg, #f3f8fe, #a9c6ef); clip-path: polygon(0 0, 100% 0, 100% 100%, 0 78%); }
.pane { flex: 1; min-width: 0; padding: 7px 2px 64px 6px; display: flex; flex-direction: column; border: 1px solid #3c6ab0; background: linear-gradient(90deg, #8cb0e6, #dbe9fc); }
.note { height: 33px; flex: none; display: flex; align-items: center; justify-content: space-between; padding: 0 7px 2px 13px; background: #f4f4f4; }
.canvas { flex: 1; background: #c8eacc; border: 1px solid #7d99c0; }
.split-v { width: 7px; flex: none; display: flex; flex-direction: column; justify-content: center; align-items: center; gap: 7px; background: linear-gradient(90deg, #dfe6ed, #8593a3); }
.flow .split-v { width: 5px; }
.split-v .sa { border-width: 4px 4px 4px 0; border-right-color: #2b4478; }
.vdots { width: 2px; height: 38px; background: repeating-linear-gradient(#2b4478 0 2px, #e8eef5 2px 4px); }
.tree { flex: 432 1 0; min-width: 0; display: grid; grid-template: minmax(0, 1fr) 17px / minmax(0, 1fr) 17px; background: #c8eacc; border-top: 1px solid #7d99c0; border-right: 1px solid #7d99c0; color: #111; }
.rows { overflow: hidden; }
.rows table { width: 100%; min-width: 414px; }
.rows th { position: relative; z-index: 1; height: 18px; padding: 0 0 0 6px; text-align: left; font-weight: normal; background: linear-gradient(#eff6fd, #dfeaf6); border-right: 1px solid #8fabcd; border-bottom: 1px solid #8fabcd; line-height: 16px; white-space: nowrap; }
.rows th:first-child { padding-left: 1px; }
.rows th:nth-child(2) { padding-left: 2px; }
.t1 { width: 155px; } .t2 { width: 55px; } .t3 { width: 75px; }
.rows td { height: 19px; padding: 0 0 0 5px; border-right: 1px solid #d2e8dc; line-height: 18px; white-space: nowrap; }
.rows td:first-child { padding: 0; }
.rows td > div { height: 19px; display: flex; align-items: center; gap: 7px; }
.leaf { padding-left: 54px; background: repeating-linear-gradient(#444 0 1px, transparent 1px 2px) 24px 0 / 1px 100% no-repeat, repeating-linear-gradient(#444 0 1px, transparent 1px 2px) 41px 0 / 1px 100% no-repeat, repeating-linear-gradient(90deg, #444 0 1px, transparent 1px 2px) 42px 9px / 9px 1px no-repeat; }
.leaf.last { background-size: 1px 100%, 1px 9px, 9px 1px; }
.rows td > .dir { gap: 4px; padding-left: 20px; background: repeating-linear-gradient(#444 0 1px, transparent 1px 2px) 24px 0 / 1px 100% no-repeat, repeating-linear-gradient(90deg, #444 0 1px, transparent 1px 2px) 30px 9px / 6px 1px no-repeat; }
.dir i { width: 9px; height: 9px; margin-right: 3px; flex: none; border: 1px solid #888; background: linear-gradient(#333, #333) center / 5px 1px no-repeat, #fff; }
.sel td { background: linear-gradient(#fff, #e4e4e4); }
.sel td:first-child { background: linear-gradient(#fff, #e4e4e4) 52px 0 no-repeat; }
/* first row is half scrolled under the header */
.rows .cut td { height: 10px; line-height: 2px; vertical-align: top; }
.rows .cut td > div { height: 2px; }
.vscroll { display: flex; flex-direction: column; align-items: center; padding: 7px 0 5px; background: #f3f4f6; }
.vscroll .ua { border-width: 0 5px 5px; border-bottom-color: #555; }
.da { width: 0; height: 0; border: solid transparent; border-width: 5px 5px 0; border-top-color: #555; }
.vthumb { width: 15px; height: 54px; margin: auto 0 104px; border: 1px solid #8f939b; border-radius: 2px; background: repeating-linear-gradient(#777 0 1px, transparent 1px 3px) center / 8px 9px no-repeat, linear-gradient(90deg, #f4f5f7, #dfe1e5); }
.hscroll { display: flex; align-items: center; padding: 0 7px 0 2px; background: #f3f4f6; }
.hscroll .sa { border-width: 5px 5px 5px 0; border-right-color: #555; }
.ra { width: 0; height: 0; border: solid transparent; border-width: 5px 0 5px 5px; border-left-color: #555; }
.hthumb { width: 217px; height: 15px; margin: 0 auto 0 6px; border: 1px solid #8f939b; border-radius: 2px; background: repeating-linear-gradient(90deg, #777 0 1px, transparent 1px 2px) center / 8px 9px no-repeat, linear-gradient(#f4f5f7, #dfe1e5); }

.detail { flex: 418 1 0; min-width: 0; display: flex; flex-direction: column; }
.dtabs { height: 26px; flex: none; display: flex; background: linear-gradient(#c0d2e8, #dce8f5); border-bottom: 1px solid #a0b4d0; color: #111; }
.dtabs button { padding: 0 12px 3px 8px; }
.dtabs .on { position: relative; width: 68px; padding: 0 10px 3px 6px; color: #fff; background: radial-gradient(circle at 50% 100%, #4c8be6, #1a56b8); }
.dtabs .on::after { content: ""; position: absolute; left: 30px; bottom: 0; border: solid transparent; border-width: 0 5px 5px; border-bottom-color: #fff; }
.dtabs button + button + button { padding-left: 10px; }
.dbody { flex: 1; min-height: 0; display: flex; }
.params { flex: 1; min-width: 0; display: flex; flex-direction: column; border: solid #3f6aa8; border-width: 0 1px 2px; }
.subtabs { position: relative; height: 23px; flex: none; padding-left: 5px; background: linear-gradient(#c8dcf8, #f5f9ff); border-bottom: 1px solid #3f6aa8; overflow: hidden; }
.subtabs button { position: absolute; left: 35px; top: 4px; color: #111; font: bold 13px/16px "Noto Sans CJK SC", sans-serif; }
.ptable { flex: 1; background: #fff; border-top: 5px solid #8fb2e6; }
.ptable table { width: 100%; color: #111; }
.p0 { width: 34px; } .p1 { width: 106px; } .p2 { width: 80px; } .p3 { width: 60px; }
.ptable thead th.rest { background: #d0dcec; border-right: 0; }
.ptable td, .ptable tbody th { height: 22px; padding: 0 0 0 1px; border-right: 1px solid #c5d5ec; border-bottom: 1px solid #c5d5ec; background: #fff; white-space: nowrap; line-height: 16px; }
.ptable tbody th { position: relative; background: linear-gradient(90deg, #d9e7f5 80%, #c3d3e8); border-color: #8fabd0; }
.ptable tr:nth-child(odd) td:nth-child(2), .ptable tr:nth-child(odd) td:nth-child(4) { background: #e8f2fb; }
.ptable tr:nth-child(even) td { background: #f2f2f2; }
.ptable tr:nth-child(even) td:last-child { background: #fff; }
.ptable .pk { color: #c01880; }
.act i { margin-left: 3px; }
.ptable .act .edit { background: linear-gradient(90deg, #8ebdf0, #b4d6fa); border: 1px dotted #113; padding: 0; }
.mark { position: absolute; z-index: 2; left: 25px; top: -2px; width: 207px; height: 26px; border: 2px solid #e01010; box-shadow: 2px 2px 5px rgba(0, 0, 0, .5), inset 2px 2px 5px rgba(0, 0, 0, .35); }
.remark { width: 33px; flex: none; display: flex; flex-direction: column; overflow: hidden; border-left: 1px solid #3f6aa8; background: #efefef; }
.remark .subtabs { padding-left: 3px; }
.rhead { height: 28px; flex: none; padding: 3px 0 0 1px; border-top: 5px solid #8fb2e6; border-bottom: 1px solid #7d8794; background: linear-gradient(#f3f8fe, #dfeaf8); white-space: nowrap; color: #1f3d7a; overflow: hidden; line-height: 16px; }
.rbody { flex: 1; }

.status { height: 32px; flex: none; display: flex; align-items: center; padding: 0 30px 2px 8px; border-top: 1px solid #66788e; border-bottom: 1px solid #66788e; background: linear-gradient(#eff6fd, #dae5f2); color: #1f3d7a; white-space: nowrap; }
.s1 { width: 59px; margin-left: 9px; }
.s2 { width: 83px; margin-left: 10px; }
.s3 { width: 206px; color: #1e395b; }
.clock { margin-left: auto; }
.status time { margin-left: 13px; font-size: 13px; color: #1e395b; }

.arrows { position: absolute; left: 0; top: 225px; pointer-events: none; }
```
